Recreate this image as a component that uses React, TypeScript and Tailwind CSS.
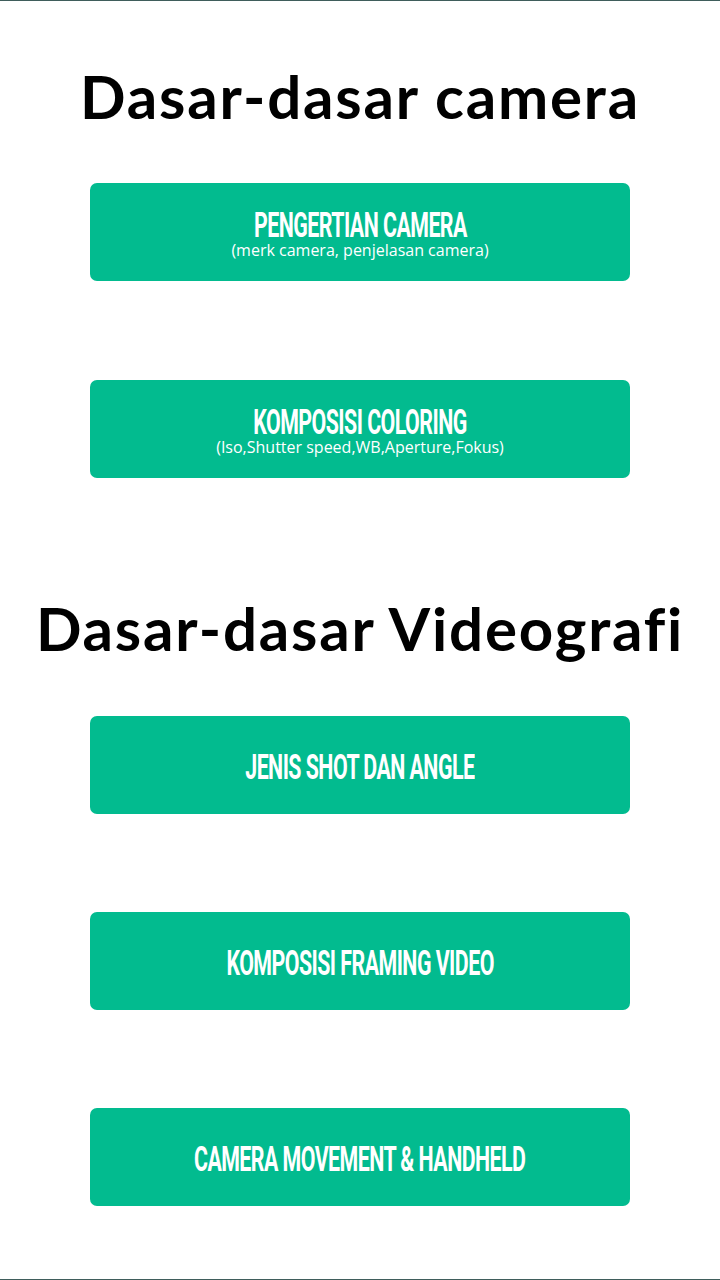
const camera = [
  { title: 'PENGERTIAN CAMERA', sub: '(merk camera, penjelasan camera)' },
  { title: 'KOMPOSISI COLORING', sub: '(Iso,Shutter speed,WB,Aperture,Fokus)' },
];

const video = [
  { title: 'JENIS SHOT DAN ANGLE' },
  { title: 'KOMPOSISI FRAMING VIDEO' },
  { title: 'CAMERA MOVEMENT & HANDHELD' },
];

function MenuButton({ title, sub }: { title: string; sub?: string }) {
  return (
    <button className="w-[540px] h-[98px] pt-[6px] rounded-[7px] bg-[#02bb8f] flex flex-col items-center justify-center text-white">
      <span
        className="inline-block scale-x-[0.61] text-[35px] leading-[30px] font-bold tracking-tight whitespace-nowrap"
        style={{ fontFamily: 'Roboto, sans-serif' }}
      >
        {title}
      </span>
      {sub && (
        <span
          className="text-[16px] leading-[18px] font-medium whitespace-nowrap"
          style={{ fontFamily: '"Open Sans", sans-serif' }}
        >
          {sub}
        </span>
      )}
    </button>
  );
}

export default function App() {
  return (
    <div className="w-full h-[1280px] bg-white border-t border-b border-[#3f5d5b] flex flex-col items-center">
      <h1
        className="mt-[60px] text-[60px] leading-[70px] font-bold tracking-[1.8px] text-black whitespace-nowrap"
        style={{ fontFamily: 'Lato, sans-serif' }}
      >
        Dasar-dasar camera
      </h1>
      <div className="mt-[52px] flex flex-col gap-[99px]">
        {camera.map((c) => (
          <MenuButton key={c.title} title={c.title} sub={c.sub} />
        ))}
      </div>
      <h1
        className="mt-[115px] text-[60px] leading-[70px] font-bold tracking-[1.8px] text-black whitespace-nowrap"
        style={{ fontFamily: 'Lato, sans-serif' }}
      >
        Dasar-dasar Videografi
      </h1>
      <div className="mt-[53px] flex flex-col gap-[98px]">
        {video.map((v) => (
          <MenuButton key={v.title} title={v.title} />
        ))}
      </div>
    </div>
  );
}
